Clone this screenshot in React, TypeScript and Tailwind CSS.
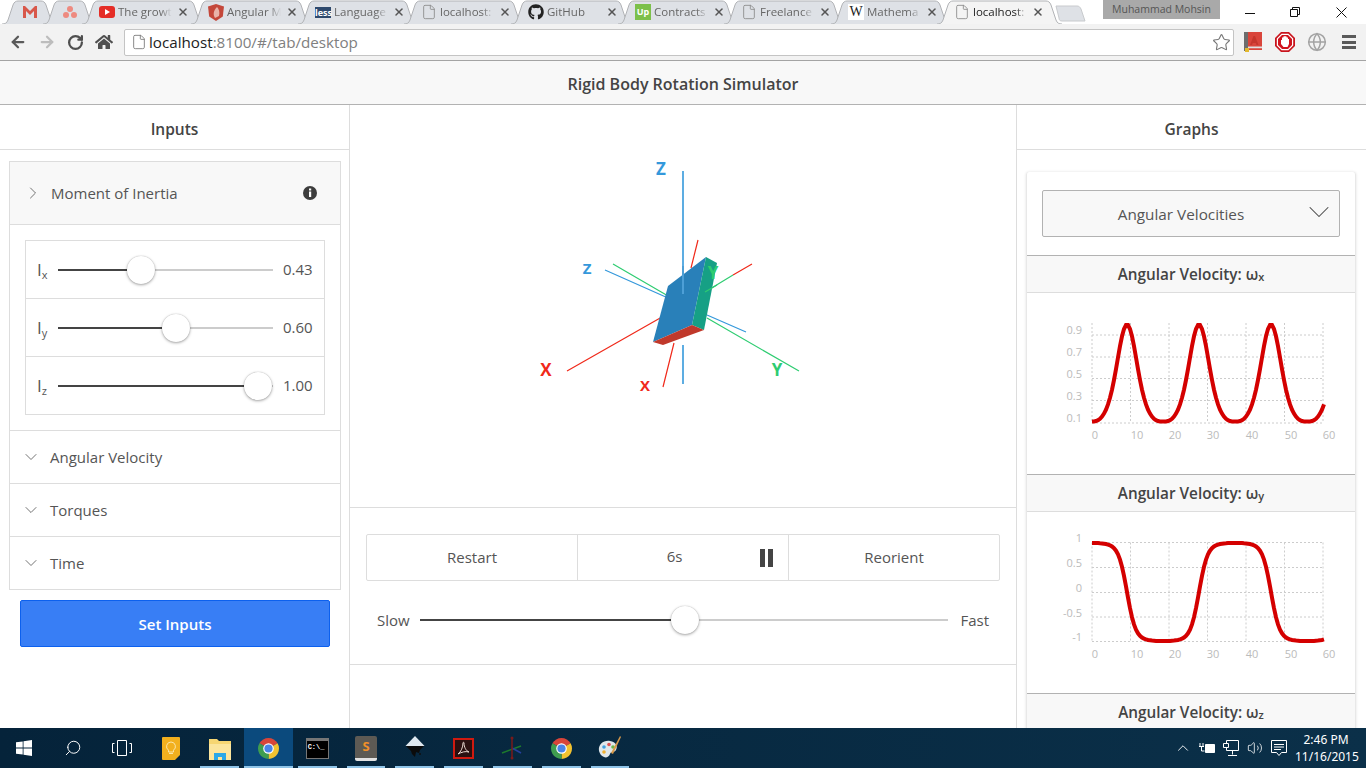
import type { ReactNode } from 'react';
import { ArrowLeft, ArrowRight, ChevronDown, ChevronRight, ChevronUp, File, Globe, RotateCw, Search, Star, Volume2, X } from 'lucide-react';
import { FaGithub, FaHome } from 'react-icons/fa';

const tabs = [
  { x: 2, w: 55, title: '', icon: 'gmail' },
  { x: 43, w: 53, title: '', icon: 'asana' },
  { x: 82, w: 123, title: 'The growt', icon: 'youtube' },
  { x: 191, w: 121, title: 'Angular M', icon: 'angular' },
  { x: 298, w: 120, title: 'Language', icon: 'less' },
  { x: 404, w: 121, title: 'localhost:', icon: 'file' },
  { x: 511, w: 121, title: 'GitHub', icon: 'github' },
  { x: 618, w: 120, title: 'Contracts', icon: 'upwork' },
  { x: 724, w: 121, title: 'Freelance', icon: 'file' },
  { x: 831, w: 120, title: 'Mathema', icon: 'wiki' },
  { x: 937, w: 125, title: 'localhost:', icon: 'file', active: true },
];

const TabIcon = ({ icon }: { icon: string }) => {
  if (icon === 'gmail')
    return (
      <svg width="16" height="14" viewBox="0 0 16 14">
        <path d="M1 13V1h2l5 5 5-5h2v12h-3V6L8 10 4 6v7z" fill="#d8574a" />
      </svg>
    );
  if (icon === 'asana')
    return (
      <svg width="16" height="14" viewBox="0 0 16 14">
        <circle cx="8" cy="4" r="3" fill="#ee8a80" />
        <circle cx="4" cy="10" r="3" fill="#ee8a80" />
        <circle cx="12" cy="10" r="3" fill="#ee8a80" />
      </svg>
    );
  if (icon === 'youtube')
    return (
      <svg width="16" height="14" viewBox="0 0 16 14">
        <rect x="0" y="1" width="16" height="12" rx="3" fill="#e52d27" />
        <path d="M6 4l5 3-5 3z" fill="#fff" />
      </svg>
    );
  if (icon === 'angular')
    return (
      <svg width="16" height="17" viewBox="0 0 16 17">
        <path d="M8 0l8 2.5-1.2 10L8 17l-6.8-4.5L0 2.5z" fill="#c4473a" />
        <path d="M9 3c2 2 3 5 2 9l-4 2c-2-3-2-7 2-11z" fill="#e9b3a9" />
      </svg>
    );
  if (icon === 'less')
    return <span className="w-4 h-[11px] bg-[#2f4a6e] text-white text-[9px] leading-[11px] text-center font-bold shrink-0">less</span>;
  if (icon === 'github') return <FaGithub className="w-4 h-4 text-[#222] shrink-0" />;
  if (icon === 'upwork')
    return <span className="w-4 h-4 bg-[#7cc04b] text-white text-[9px] leading-4 text-center font-bold shrink-0">Up</span>;
  if (icon === 'wiki')
    return <span className="w-4 h-4 bg-white text-[#222] text-[14px] leading-4 text-center font-['Liberation_Serif',serif] shrink-0">W</span>;
  return <File className="w-4 h-4 text-[#8a8a8a] shrink-0" strokeWidth={1.3} />;
};

const TabStrip = () => (
  <div className="relative h-6 bg-white shrink-0 overflow-hidden">
    {tabs.map((t) => (
      <div key={t.x} className="absolute top-0 h-6 flex items-center" style={{ left: t.x, width: t.w }}>
        <svg className="absolute inset-0" width={t.w} height={24} fill="none">
          <path d={`M0 24c3 0 5-1 6-4l5-15c1-3 3-4 5-4h${t.w - 32}c2 0 4 1 5 4l5 15c1 3 3 4 6 4z`} fill={t.active ? '#f4f4f4' : '#dee1e6'} />
          <path d={`M0 24c3 0 5-1 6-4l5-15c1-3 3-4 5-4h${t.w - 32}c2 0 4 1 5 4l5 15c1 3 3 4 6 4`} stroke="#b1b3b6" />
        </svg>
        <div className={`relative flex items-center w-full ${t.title ? 'pl-[17px]' : 'justify-center'}`}>
          <TabIcon icon={t.icon} />
          {t.title && (
            <>
              <span className={`ml-[3px] w-[54px] text-[11.5px] whitespace-nowrap [mask-image:linear-gradient(to_right,black_78%,transparent)] ${t.active ? 'text-[#222]' : 'text-[#666]'}`}>{t.title}</span>
              <X className="w-3 h-3 ml-[5px] text-[#555] shrink-0" strokeWidth={3} />
            </>
          )}
        </div>
      </div>
    ))}
    <svg className="absolute top-[5px] left-[1055px]" width="32" height="17">
      <path d="M1 1h21c2 0 3 1 4 3l4 12H7c-2 0-3-1-3-3z" fill="#dee1e6" stroke="#c8cacd" />
    </svg>
    <div className="absolute top-0 left-[1103px] w-[117px] h-[19px] bg-[#a9a9a9] text-[#555] text-[10.5px] leading-[18px] text-center">Muhammad Mohsin</div>
    <svg className="absolute top-0 left-[1240px]" width="126" height="24" fill="none" stroke="#111">
      <path d="M5 13.5h10" />
      <path d="M50.5 9.5h7v7h-7zM52.5 9.5v-2h7v7h-2" />
      <path d="M96.5 7.5l10 10M106.5 7.5l-10 10" />
    </svg>
  </div>
);

const Toolbar = () => (
  <div className="h-[37px] bg-[#f2f2f2] border-b border-[#a4a4a4] flex items-center shrink-0">
    <ArrowLeft className="w-[18px] h-[18px] ml-[9px] text-[#5a5a5a]" strokeWidth={3} />
    <ArrowRight className="w-[18px] h-[18px] ml-[11px] text-[#bdbdbd]" strokeWidth={3} />
    <RotateCw className="w-[17px] h-[17px] ml-[11px] text-[#4f4f4f]" strokeWidth={3.2} />
    <FaHome className="w-[18px] h-[18px] ml-[11px] text-[#4f4f4f]" />
    <div className="ml-[11px] w-[1110px] h-[27px] bg-white border border-[#c4c4c4] rounded-[2px] flex items-center">
      <File className="w-4 h-4 ml-[6px] text-[#777]" strokeWidth={1.3} />
      <span className="ml-[2px] text-[15.2px] text-[#222]">localhost</span>
      <span className="text-[15.2px] text-[#808080]">:8100/#/tab/desktop</span>
      <Star className="w-[19px] h-[19px] ml-auto mr-[2px] text-[#777]" strokeWidth={1.4} />
    </div>
    <svg className="ml-[10px]" width="18" height="20" viewBox="0 0 18 20">
      <rect x="0" y="0" width="18" height="18" fill="#d9453b" />
      <rect x="0" y="0" width="4" height="19" fill="#6d6d6d" />
      <path d="M6 13l3.500-9h1.500l3.500 9h-2l-.7-2H8.700L8 13z" fill="#c5362c" />
      <rect x="4" y="14.500" width="14" height="2" fill="#e0e0e0" />
      <rect x="4" y="16.500" width="14" height="1.500" fill="#d9453b" />
      <rect x="1" y="16" width="4" height="4" fill="#e3b92f" />
    </svg>
    <svg className="ml-[13px]" width="20" height="20" viewBox="0 0 20 20">
      <path d="M6 0h8l6 6v8l-6 6H6l-6-6V6z" fill="#c9141d" />
      <path d="M6.600 1.800h6.800l4.800 4.800v6.800l-4.800 4.800H6.600l-4.800-4.800V6.600z" fill="#fff" />
      <path d="M7 3h6l4 4v6l-4 4H7l-4-4V7z" fill="#d0141e" />
      <path d="M6 8h1V5.500h1.300V4.500h1.200V4h1v.5h1.200v1H13V7h1v5l-1.500 3h-4L6 12z" fill="#fff" />
    </svg>
    <Globe className="w-[20px] h-[20px] ml-[12px] text-[#a3a3a3]" strokeWidth={1.8} />
    <div className="ml-[15px] w-[14px] flex flex-col gap-[2.5px]">
      <div className="h-[3px] bg-[#5a5a5a]" />
      <div className="h-[3px] bg-[#5a5a5a]" />
      <div className="h-[3px] bg-[#5a5a5a]" />
    </div>
  </div>
);

const Range = ({ pct }: { pct: number }) => (
  <div className="relative flex-1 h-[2px] bg-[#ccc]">
    <div className="h-[2px] bg-[#444]" style={{ width: `${pct}%` }} />
    <div
      className="absolute top-[-13px] w-[28px] h-[28px] -ml-[14px] bg-white rounded-full shadow-[0_1px_3px_rgba(0,0,0,0.35),0_0_1px_rgba(0,0,0,0.25)]"
      style={{ left: `${pct}%` }}
    />
  </div>
);

const sliders = [
  { sub: 'x', value: '0.43', pct: 38.6 },
  { sub: 'y', value: '0.60', pct: 54.9 },
  { sub: 'z', value: '1.00', pct: 93 },
];

const InputsPanel = () => (
  <div className="w-[350px] border-r border-[#ddd] shrink-0">
    <div className="h-[45px] border-b border-[#ddd] flex items-center justify-center text-[15.5px] font-semibold text-[#444] pt-[5px]">Inputs</div>
    <div className="mt-[11px] ml-[9px] w-[332px] border border-[#ddd]">
      <div className="h-[63px] bg-[#f8f8f8] border-b border-[#ddd] flex items-center text-[#555]">
        <ChevronRight className="w-5 h-5 ml-[13px] text-[#666]" strokeWidth={1.1} />
        <span className="ml-[8px] text-[15px]">Moment of Inertia</span>
        <svg className="ml-auto mr-[23px]" width="14" height="14" viewBox="0 0 14 14">
          <circle cx="7" cy="7" r="7" fill="#3d3d3d" />
          <rect x="6" y="5.5" width="2.2" height="5.5" fill="#fff" />
          <rect x="6" y="2.5" width="2.2" height="2" fill="#fff" />
        </svg>
      </div>
      <div className="p-[15px]">
        <div className="border border-[#ddd]">
          {sliders.map((s, i) => (
            <div key={s.sub} className={`flex items-center ${i < 2 ? 'h-[58px] border-b border-[#ddd]' : 'h-[57px]'}`}>
              <span className="ml-[11px] w-[21px] text-[17px] text-[#555] leading-none whitespace-nowrap">
                I<sub className="text-[11px]">{s.sub}</sub>
              </span>
              <Range pct={s.pct} />
              <span className="ml-[10px] w-[41px] text-[15px] text-[#555]">{s.value}</span>
            </div>
          ))}
        </div>
      </div>
      {['Angular Velocity', 'Torques', 'Time'].map((label) => (
        <div key={label} className="h-[53px] border-t border-[#ddd] flex items-center text-[15px] text-[#555]">
          <ChevronDown className="w-5 h-5 ml-[11px] text-[#666]" strokeWidth={1.1} />
          <span className="ml-[9px]">{label}</span>
        </div>
      ))}
    </div>
    <button className="mt-[10px] ml-[20px] w-[310px] h-[47px] pt-[1px] bg-[#387ef5] border border-[#0c60ee] rounded-[2px] text-white text-[15px] font-semibold">Set Inputs</button>
  </div>
);

const Scene = () => (
  <svg className="block" width="666" height="402" viewBox="350 105 666 402" fill="none">
    <g strokeWidth="1.2">
      <path d="M605 270l72 32M707 315l39 17" stroke="#3498db" />
      <path d="M613 264l62 36M707 318l92 53M705 292l28-17" stroke="#2ecc71" />
      <path d="M567 371l109-62M733 275l19-11M698 240l-7 28M674 343l-11 44" stroke="#f0291a" />
    </g>
    <path d="M683 171v95M683 345v39" stroke="#5dade2" strokeWidth="2" />
    <path d="M668 286l38-29-14 68-39 17z" fill="#2980b9" />
    <path d="M706 257l11 6-13 67-12-5z" fill="#16a085" />
    <path d="M653 342l39-17 12 5-41 15z" fill="#c0392b" />
    <path d="M683 266v28" stroke="#4d9fd6" strokeWidth="2" />
    <path d="M705 292l12-7" stroke="#2ecc71" strokeWidth="1.2" />
    <g className="font-['Open_Sans',sans-serif] font-bold" textAnchor="middle">
      <text x="661" y="175" fontSize="17" fill="#3498db">Z</text>
      <text x="587" y="274" fontSize="15" fill="#3498db">Z</text>
      <text x="546" y="376" fontSize="17" fill="#f0291a">X</text>
      <text x="645" y="391" fontSize="15" fill="#f0291a">X</text>
      <text x="777" y="376" fontSize="17" fill="#2ecc71">Y</text>
      <text x="713" y="279" fontSize="17" fill="#2ecc71">Y</text>
    </g>
  </svg>
);

const Center = () => (
  <div className="flex-1 min-w-0">
    <div className="h-[403px] border-b border-[#ddd]">
      <Scene />
    </div>
    <div className="h-[157px] border-b border-[#ddd] px-4 pt-[26px]">
      <div className="h-[47px] border border-[#ddd] rounded-[2px] flex text-[15px] text-[#555]">
        <div className="flex-1 flex items-center justify-center">Restart</div>
        <div className="flex-1 border-x border-[#ddd] flex items-center relative">
          <span className="w-full text-center -mt-[3px] pr-[17px]">6s</span>
          <div className="absolute left-[182px] top-[14px] flex gap-[3px]">
            <div className="w-[5px] h-[18px] bg-[#444]" />
            <div className="w-[5px] h-[18px] bg-[#444]" />
          </div>
        </div>
        <div className="flex-1 flex items-center justify-center">Reorient</div>
      </div>
      <div className="mt-[25px] -mx-[5px] h-7 flex items-center text-[15px] text-[#555] px-4">
        <span className="w-[43px]">Slow</span>
        <Range pct={50.2} />
        <span className="w-[41px] text-right">Fast</span>
      </div>
    </div>
  </div>
);

const wavePath = (f: (x: number) => number) => {
  const pts: string[] = [];
  for (let x = 1092; x <= 1324; x += 2) pts.push(`${x} ${f(x).toFixed(1)}`);
  return `M${pts.join('L')}`;
};

const waveX = wavePath((x) => {
  const a = (1 + Math.cos(((x - 1127) / 72) * 2 * Math.PI)) / 2;
  return 421.5 - 97 * 0.5 * (Math.pow(a, 1.5) + Math.pow(a, 4));
});
const waveY = wavePath((x) => 592 - 49 * (Math.tanh(2.6 * Math.cos(((x - 1091) / 144) * 2 * Math.PI)) / Math.tanh(2.6)));

const gridX = [1092, 1130.5, 1169, 1207.5, 1246, 1284.5, 1323];
const xLabels = [
  ['0', 1095],
  ['10', 1137],
  ['20', 1175],
  ['30', 1213],
  ['40', 1252],
  ['50', 1291],
  ['60', 1329],
] as const;

const Chart = ({ top, rows, labels, labelY, axisY, wave }: { top: number; rows: number[]; labels: string[]; labelY: number[]; axisY: number; wave: string }) => (
  <svg className="block" width="328" height="181" viewBox={`1027 ${top} 328 181`} fill="none">
    <g stroke="#ccc" strokeDasharray="2 2">
      {gridX.map((x) => (
        <path key={x} d={`M${x} ${rows[0] - (top === 293 ? 12 : 0)}V${rows[rows.length - 1]}`} />
      ))}
      {rows.map((y) => (
        <path key={y} d={`M1092 ${y}H1323`} />
      ))}
    </g>
    <g className="font-['Open_Sans',sans-serif]" fontSize="11" fill="#bbb" stroke="none">
      {labels.map((l, i) => (
        <text key={l} x="1082" y={labelY[i] + 4} textAnchor="end">{l}</text>
      ))}
      {xLabels.map(([l, x]) => (
        <text key={l} x={x} y={axisY + 4} textAnchor="middle">{l}</text>
      ))}
    </g>
    <path d={wave} stroke="#d40000" strokeWidth="4" />
  </svg>
);

const ChartHead = ({ sub }: { sub: string }) => (
  <div className="h-[38px] bg-[#f8f8f8] border-y border-t-[#b2b2b2] border-b-[#ddd] flex items-center justify-center text-[15.3px] font-semibold text-[#444] whitespace-nowrap">
    Angular Velocity: ω<sub className="text-[11px]">{sub}</sub>
  </div>
);

const GraphsPanel = () => (
  <div className="w-[350px] border-l border-[#ddd] shrink-0 overflow-hidden">
    <div className="h-[45px] border-b border-[#ddd] flex items-center justify-center text-[15.5px] font-semibold text-[#444] pt-[5px]">Graphs</div>
    <div className="mt-[22px] ml-[9px] w-[330px] border-x border-[#e8e8e8] rounded-t-[3px] shadow-[0_0_3px_rgba(0,0,0,0.12)]">
      <div className="px-[15px] pt-[18px] pb-[18px]">
        <div className="relative h-[47px] pt-[1px] bg-[#f8f8f8] border border-[#b2b2b2] rounded-[2px] flex items-center justify-center text-[15.3px] text-[#555]">
          <span className="pr-[20px]">Angular Velocities</span>
          <ChevronDown className="absolute right-[2px] top-[3px] w-9 h-9 text-[#444]" strokeWidth={0.7} />
        </div>
      </div>
      <ChartHead sub="x" />
      <Chart top={293} rows={[335, 357, 378.5, 400.5, 423]} labels={['0.9', '0.7', '0.5', '0.3', '0.1']} labelY={[329.5, 351.5, 373.5, 395.5, 417.5]} axisY={435} wave={waveX} />
      <ChartHead sub="y" />
      <Chart top={512} rows={[542.5, 567.5, 592.5, 617, 641.5]} labels={['1', '0.5', '0', '-0.5', '-1']} labelY={[537.5, 562.5, 587.5, 613, 637]} axisY={653.5} wave={waveY} />
      <ChartHead sub="z" />
    </div>
  </div>
);

const ChromeIcon = () => (
  <svg width="23" height="23" viewBox="0 0 24 24">
    <path d="M2.5 6.500A11 11 0 0 1 21.500 6.500L12 12z" fill="#d8453a" />
    <path d="M21.500 6.500A11 11 0 0 1 12 23L12 12z" fill="#f2c230" />
    <path d="M12 23A11 11 0 0 1 2.500 6.500L12 12z" fill="#3f9d50" />
    <circle cx="12" cy="12" r="5.5" fill="#fff" />
    <circle cx="12" cy="12" r="4.3" fill="#4a84e8" />
  </svg>
);

const taskItems: { node: ReactNode; bar?: boolean; active?: boolean }[] = [
  {
    node: (
      <svg width="16" height="16" viewBox="0 0 16 16" fill="#fff">
        <path d="M0 2.300l6.700-.9v6.200H0zM7.500 1.300L16 0v7.600H7.500zM0 8.400h6.700v6.200L0 13.700zM7.500 8.400H16V16l-8.500-1.200z" />
      </svg>
    ),
  },
  { node: <Search className="w-[18px] h-[18px] text-white -scale-x-100" strokeWidth={1.3} /> },
  {
    node: (
      <svg width="20" height="18" viewBox="0 0 20 18" fill="none" stroke="#fff">
        <path d="M5.500 1.500h9v15h-9zM2.500 4.500h-2v9h2M17.500 4.500h2v9h-2" />
      </svg>
    ),
  },
  {
    node: (
      <svg width="18" height="23" viewBox="0 0 18 23">
        <path d="M1 0h16a1 1 0 0 1 1 1v17l-5 5H1a1 1 0 0 1-1-1V1a1 1 0 0 1 1-1z" fill="#f2b01e" />
        <path d="M9 5a4.500 4.500 0 0 0-2.500 8.200V15h5v-1.800A4.500 4.500 0 0 0 9 5zM7 16.500h4" fill="none" stroke="#fbe6a8" />
      </svg>
    ),
  },
  {
    node: (
      <svg width="22" height="23" viewBox="0 0 22 23">
        <path d="M0 2h8l2 2h12v19H0z" fill="#f6d672" />
        <path d="M0 7h22v16H0z" fill="#fbe59c" />
        <path d="M5 23v-7h12v7h-4v-3H9v3z" fill="#29a8e8" />
      </svg>
    ),
    bar: true,
  },
  { node: <ChromeIcon />, bar: true, active: true },
  {
    node: (
      <div className="w-[23px] h-[21px] bg-black border border-[#777] border-t-[3px] text-white text-[7px] leading-[12px] font-['Liberation_Mono',monospace] font-bold pl-[1px] overflow-hidden whitespace-nowrap">C:\_</div>
    ),
    bar: true,
  },
  {
    node: (
      <div className="w-[22px] h-[25px] bg-[#5d5a54] border-b-[3px] border-[#e2e2e2] rounded-[2px] text-[#f0902a] text-[13px] leading-[20px] text-center font-bold">S</div>
    ),
    bar: true,
  },
  {
    node: (
      <svg width="20" height="24" viewBox="0 0 20 24">
        <path d="M10 0l9.500 10H.5z" fill="#dfe8ef" />
        <path d="M1 10h18l-4 4-1 3-3-1-1 5-3-3-1-3z" fill="#0b0b0b" />
        <circle cx="15" cy="18" r="1" fill="#111" />
      </svg>
    ),
    bar: true,
  },
  {
    node: (
      <svg width="21" height="21" viewBox="0 0 21 21" fill="none">
        <rect x="1" y="1" width="19" height="19" fill="#2a1010" stroke="#d01a10" strokeWidth="2" />
        <path d="M5 16c3-2 5-7 5-11 0-1 1-1 1 0 0 4 2 8 5 9-4-1-7 0-11 2z" stroke="#e8d8d0" />
      </svg>
    ),
    bar: true,
  },
  {
    node: (
      <svg width="24" height="24" viewBox="0 0 24 24" fill="none" strokeWidth="1.5">
        <path d="M2 17l19-7" stroke="#1d7a2c" />
        <path d="M12 12l9 5" stroke="#263f9d" />
        <path d="M12 1v22" stroke="#7a1a1a" />
        <circle cx="12" cy="2" r="1.500" fill="#7a1a1a" />
        <circle cx="12" cy="22" r="1.500" fill="#7a1a1a" />
      </svg>
    ),
    bar: true,
  },
  { node: <ChromeIcon />, bar: true },
  {
    node: (
      <svg width="24" height="26" viewBox="0 0 24 26">
        <path d="M1 16C0 9 6 5 12 6c6 1 8 5 6 9-2 3-5 1-6 4-1 3-4 4-6 3-3-1-4-3-5-6z" fill="#dfe6ea" />
        <circle cx="6" cy="12" r="1.8" fill="#3f9fe0" />
        <circle cx="11" cy="9.500" r="1.8" fill="#e05050" />
        <circle cx="15" cy="12" r="1.8" fill="#6cb84a" />
        <circle cx="6" cy="17" r="1.8" fill="#f0b030" />
        <path d="M22 1l1 1-8 17-2-1z" fill="#d89a4a" />
      </svg>
    ),
    bar: true,
  },
];

const Taskbar = () => (
  <div className="h-10 shrink-0 bg-linear-to-r from-[#05233a] to-[#0b3049] flex items-center text-white">
    {taskItems.map((item, i) => (
      <div key={i} className={`relative w-[48.8px] h-10 flex items-center justify-center shrink-0 ${item.active ? 'bg-[#0b4a7d]' : ''}`}>
        {item.node}
        {item.bar && <span className={`absolute bottom-0 h-[2px] bg-[#8fc4e8] ${item.active ? 'inset-x-0' : 'inset-x-[5px]'}`} />}
      </div>
    ))}
    <ChevronUp className="ml-auto w-[18px] h-[18px]" strokeWidth={1.2} />
    <svg className="ml-[7px]" width="16" height="12" viewBox="0 0 16 12" fill="none" stroke="#fff">
      <path d="M1 1v3M4 1v3M0 4.500h5M2.500 5v4h3" />
      <path d="M6.500 2.500h9v8h-9z" fill="#fff" />
    </svg>
    <svg className="ml-2" width="16" height="17" viewBox="0 0 16 17" fill="none" stroke="#fff">
      <path d="M3.500 3V.5h12v10h-12V8M9.500 10.500v4M5 15.500h9M.5 3.500h5v4h-5z" />
    </svg>
    <Volume2 className="ml-2 w-4 h-4" strokeWidth={1.2} />
    <svg className="ml-2" width="16" height="17" viewBox="0 0 16 17" fill="none" stroke="#fff">
      <path d="M.5.500h15v12h-5l-2.500 3-2.500-3h-5zM3 4.500h10M3 7h10M3 9.500h7" />
    </svg>
    <div className="ml-2 mr-[9px] w-[62px] text-[12px] leading-[17px] text-center whitespace-nowrap font-['Noto_Sans',sans-serif]">
      <div>2:46 PM</div>
      <div>11/16/2015</div>
    </div>
  </div>
);

export default function App() {
  return (
    <div className="w-[1366px] h-[768px] flex flex-col overflow-hidden bg-white font-['Open_Sans','Noto_Sans',sans-serif]">
      <TabStrip />
      <Toolbar />
      <div className="h-[44px] pt-[3px] bg-[#f8f8f8] border-b border-[#b2b2b2] flex items-center justify-center text-[16px] font-semibold text-[#444] shrink-0">Rigid Body Rotation Simulator</div>
      <div className="flex-1 min-h-0 flex">
        <InputsPanel />
        <Center />
        <GraphsPanel />
      </div>
      <Taskbar />
    </div>
  );
}
